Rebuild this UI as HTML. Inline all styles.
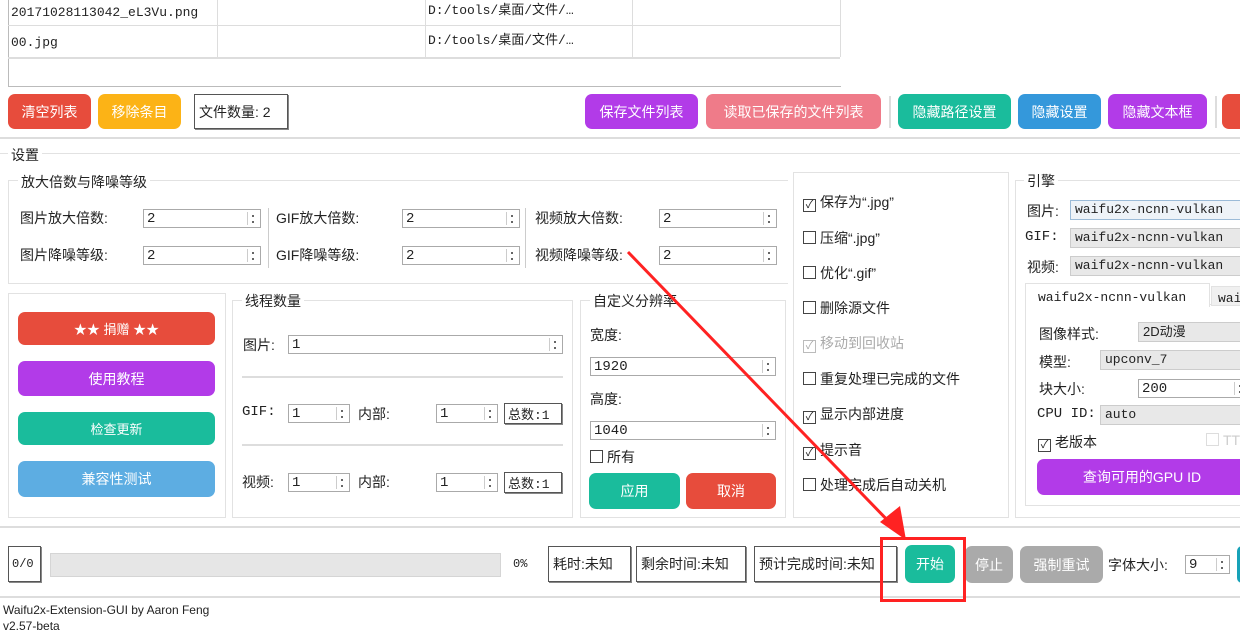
<!DOCTYPE html>
<html><head><meta charset="utf-8"><style>
*{box-sizing:border-box;margin:0;padding:0}
body{width:1240px;height:626px;overflow:hidden;background:#fff;position:relative;font-family:"Liberation Sans","Noto Sans CJK SC",sans-serif;font-size:14px;color:#222}
.a{position:absolute}
.btn{position:absolute;border-radius:7px;color:#fff;text-align:center;font-size:14px;display:flex;align-items:center;justify-content:center}
.box{position:absolute;border:1px solid #555;background:#fff;display:flex;align-items:center;padding-left:4px;font-size:14px;box-shadow:1px 1px 0 #888}
.sp{position:absolute;border:1px solid #aaa;background:#fff;height:19px;font-size:14px;padding-left:3px;line-height:19px;font-family:"Liberation Mono","Noto Sans CJK SC",monospace}
.sp::after{content:"";position:absolute;right:2px;top:2px;width:10px;height:13px;border-left:1px solid #ccc;background:linear-gradient(#666,#666) 4px 3px/2px 2px no-repeat,linear-gradient(#666,#666) 4px 9px/2px 2px no-repeat}
.grp{position:absolute;border:1px solid #e2e2e2}
.gt{position:absolute;background:#fff;padding:0 3px;font-size:14px}
.hl{position:absolute;height:2px;background:#ddd}
.cb{position:absolute;font-size:14px;white-space:nowrap}
.cb i{display:inline-block;width:13px;height:13px;border:1px solid #444;vertical-align:-1px;margin-right:4px;font-style:normal;font-size:11px;line-height:11px;text-align:center}
.cmb{position:absolute;background:#e8e8e8;border:1px solid #ccc;height:20px;font-family:"Liberation Mono",monospace;font-size:13px;padding-left:4px;line-height:18px}
.m{font-family:"Liberation Mono","Noto Sans CJK SC",monospace}
.t{line-height:16px;font-size:13px}
</style></head><body>
<div class="a" style="left:8px;top:0;width:833px;height:87px;border:1px solid #bbb;border-top:none;border-right:none"></div>
<div class="a" style="left:8px;top:25px;width:832px;height:1px;background:#ddd"></div>
<div class="a" style="left:8px;top:57px;width:832px;height:2px;background:#ddd"></div>
<div class="a" style="left:217px;top:0;width:1px;height:57px;background:#ddd"></div>
<div class="a" style="left:425px;top:0;width:1px;height:57px;background:#ddd"></div>
<div class="a" style="left:632px;top:0;width:1px;height:57px;background:#ddd"></div>
<div class="a" style="left:840px;top:0;width:1px;height:57px;background:#ddd"></div>
<div class="a m t" style="left:11px;top:5px">20171028113042_eL3Vu.png</div>
<div class="a m t" style="left:11px;top:35px">00.jpg</div>
<div class="a m t" style="left:428px;top:3px">D:/tools/桌面/文件/…</div>
<div class="a m t" style="left:428px;top:33px">D:/tools/桌面/文件/…</div>
<div class="btn" style="left:8px;top:94px;width:83px;height:35px;background:#e74c3c">清空列表</div>
<div class="btn" style="left:98px;top:94px;width:83px;height:35px;background:#fcb316">移除条目</div>
<div class="box" style="left:194px;top:94px;width:94px;height:35px">文件数量: 2</div>
<div class="btn" style="left:585px;top:94px;width:113px;height:35px;background:#b23be8">保存文件列表</div>
<div class="btn" style="left:706px;top:94px;width:175px;height:35px;background:#ef7b89">读取已保存的文件列表</div>
<div class="a" style="left:889px;top:96px;width:2px;height:32px;background:#ddd"></div>
<div class="btn" style="left:898px;top:94px;width:113px;height:35px;background:#1abc9c">隐藏路径设置</div>
<div class="btn" style="left:1018px;top:94px;width:83px;height:35px;background:#3498db">隐藏设置</div>
<div class="btn" style="left:1108px;top:94px;width:99px;height:35px;background:#b23be8">隐藏文本框</div>
<div class="a" style="left:1215px;top:96px;width:2px;height:32px;background:#ddd"></div>
<div class="btn" style="left:1222px;top:94px;width:30px;height:35px;background:#e74c3c"></div>
<div class="hl" style="left:0;top:137px;width:1240px"></div>
<div class="hl" style="left:0;top:153px;width:1240px;height:1px;background:#e2e2e2"></div>
<div class="gt" style="left:8px;top:145px">设置</div>
<div class="grp" style="left:8px;top:180px;width:780px;height:104px;border-right:none"></div>
<div class="gt" style="left:18px;top:172px">放大倍数与降噪等级</div>
<div class="a" style="left:20px;top:208px">图片放大倍数:</div>
<div class="a" style="left:20px;top:245px">图片降噪等级:</div>
<div class="sp" style="left:143px;top:209px;width:118px">2</div>
<div class="sp" style="left:143px;top:246px;width:118px">2</div>
<div class="a" style="left:268px;top:208px;width:1px;height:60px;background:#ccc"></div>
<div class="a" style="left:276px;top:208px">GIF放大倍数:</div>
<div class="a" style="left:276px;top:245px">GIF降噪等级:</div>
<div class="sp" style="left:402px;top:209px;width:118px">2</div>
<div class="sp" style="left:402px;top:246px;width:118px">2</div>
<div class="a" style="left:525px;top:208px;width:1px;height:60px;background:#ccc"></div>
<div class="a" style="left:535px;top:208px">视频放大倍数:</div>
<div class="a" style="left:535px;top:245px">视频降噪等级:</div>
<div class="sp" style="left:659px;top:209px;width:118px">2</div>
<div class="sp" style="left:659px;top:246px;width:118px">2</div>
<div class="grp" style="left:8px;top:293px;width:218px;height:225px"></div>
<div class="btn" style="left:18px;top:312px;width:197px;height:33px;background:#e74c3c;font-size:13px">★★ 捐赠 ★★</div>
<div class="btn" style="left:18px;top:361px;width:197px;height:35px;background:#b23be8">使用教程</div>
<div class="btn" style="left:18px;top:412px;width:197px;height:33px;background:#1abc9c;font-size:13px">检查更新</div>
<div class="btn" style="left:18px;top:461px;width:197px;height:36px;background:#5dade2">兼容性测试</div>
<div class="grp" style="left:232px;top:300px;width:341px;height:218px"></div>
<div class="gt" style="left:242px;top:291px">线程数量</div>
<div class="a" style="left:243px;top:335px">图片:</div>
<div class="sp" style="left:288px;top:335px;width:275px">1</div>
<div class="hl" style="left:242px;top:376px;width:321px"></div>
<div class="a m" style="left:242px;top:404px">GIF:</div>
<div class="sp" style="left:288px;top:404px;width:62px">1</div>
<div class="a" style="left:358px;top:404px">内部:</div>
<div class="sp" style="left:436px;top:404px;width:62px">1</div>
<div class="box m" style="left:504px;top:403px;width:58px;height:21px;font-size:13px;padding-left:3px">总数:1</div>
<div class="hl" style="left:242px;top:444px;width:321px"></div>
<div class="a" style="left:242px;top:472px">视频:</div>
<div class="sp" style="left:288px;top:473px;width:62px">1</div>
<div class="a" style="left:358px;top:472px">内部:</div>
<div class="sp" style="left:436px;top:473px;width:62px">1</div>
<div class="box m" style="left:504px;top:472px;width:58px;height:21px;font-size:13px;padding-left:3px">总数:1</div>
<div class="grp" style="left:580px;top:300px;width:206px;height:218px"></div>
<div class="gt" style="left:590px;top:291px">自定义分辨率</div>
<div class="a" style="left:590px;top:325px">宽度:</div>
<div class="sp" style="left:590px;top:357px;width:186px">1920</div>
<div class="a" style="left:590px;top:389px">高度:</div>
<div class="sp" style="left:590px;top:421px;width:186px">1040</div>
<div class="cb" style="left:590px;top:447px"><i></i>所有</div>
<div class="btn" style="left:589px;top:473px;width:91px;height:36px;background:#1abc9c">应用</div>
<div class="btn" style="left:686px;top:473px;width:90px;height:36px;background:#e74c3c">取消</div>
<div class="grp" style="left:793px;top:172px;width:216px;height:346px"></div>
<div class="cb" style="left:803px;top:192px"><i>✓</i>保存为“.jpg”</div>
<div class="cb" style="left:803px;top:228px"><i></i>压缩“.jpg”</div>
<div class="cb" style="left:803px;top:263px"><i></i>优化“.gif”</div>
<div class="cb" style="left:803px;top:298px"><i></i>删除源文件</div>
<div class="cb" style="left:803px;top:333px;color:#aaa"><i style="border-color:#bbb">✓</i>移动到回收站</div>
<div class="cb" style="left:803px;top:369px"><i></i>重复处理已完成的文件</div>
<div class="cb" style="left:803px;top:404px"><i>✓</i>显示内部进度</div>
<div class="cb" style="left:803px;top:440px"><i>✓</i>提示音</div>
<div class="cb" style="left:803px;top:475px"><i></i>处理完成后自动关机</div>
<div class="grp" style="left:1015px;top:180px;width:230px;height:338px"></div>
<div class="gt" style="left:1024px;top:171px">引擎</div>
<div class="a" style="left:1027px;top:201px">图片:</div>
<div class="cmb" style="left:1070px;top:200px;width:175px;background:#eef3f8;border-color:#9bbbd8">waifu2x-ncnn-vulkan</div>
<div class="a m" style="left:1025px;top:229px">GIF:</div>
<div class="cmb" style="left:1070px;top:228px;width:175px">waifu2x-ncnn-vulkan</div>
<div class="a" style="left:1027px;top:257px">视频:</div>
<div class="cmb" style="left:1070px;top:256px;width:175px">waifu2x-ncnn-vulkan</div>
<div class="grp" style="left:1025px;top:304px;width:220px;height:202px"></div>
<div class="a" style="left:1025px;top:283px;width:185px;height:24px;border:1px solid #e2e2e2;border-bottom:none;background:#fff"></div>
<div class="a m" style="left:1038px;top:290px;font-size:13px">waifu2x-ncnn-vulkan</div>
<div class="a" style="left:1211px;top:286px;width:40px;height:20px;background:#f0f0f0;border:1px solid #e2e2e2"></div>
<div class="a m" style="left:1218px;top:291px;font-size:13px">wai</div>
<div class="a" style="left:1039px;top:324px">图像样式:</div>
<div class="cmb" style="left:1138px;top:322px;width:110px;font-family:'Liberation Sans','Noto Sans CJK SC',sans-serif">2D动漫</div>
<div class="a" style="left:1039px;top:352px">模型:</div>
<div class="cmb" style="left:1100px;top:350px;width:145px">upconv_7</div>
<div class="a" style="left:1039px;top:379px">块大小:</div>
<div class="sp" style="left:1138px;top:379px;width:110px">200</div>
<div class="a m" style="left:1037px;top:406px">CPU ID:</div>
<div class="cmb" style="left:1100px;top:405px;width:145px">auto</div>
<div class="cb" style="left:1038px;top:432px"><i>✓</i>老版本</div>
<div class="cb" style="left:1206px;top:432px;color:#ccc"><i style="border-color:#ddd"></i>TT</div>
<div class="btn" style="left:1037px;top:459px;width:210px;height:36px;background:#b23be8">查询可用的GPU ID</div>
<div class="hl" style="left:0;top:526px;width:1240px"></div>
<div class="box m" style="left:8px;top:546px;width:33px;height:36px;font-size:12px;padding-left:3px">0/0</div>
<div class="a" style="left:50px;top:553px;width:451px;height:24px;background:#e6e6e6;border:1px solid #d5d5d5"></div>
<div class="a m" style="left:513px;top:557px;font-size:12px">0%</div>
<div class="box" style="left:548px;top:546px;width:83px;height:36px">耗时:未知</div>
<div class="box" style="left:636px;top:546px;width:110px;height:36px">剩余时间:未知</div>
<div class="box" style="left:754px;top:546px;width:143px;height:36px;overflow:hidden;white-space:nowrap">预计完成时间:未知</div>
<div class="btn" style="left:905px;top:545px;width:50px;height:38px;background:#1abc9c">开始</div>
<div class="btn" style="left:965px;top:546px;width:48px;height:37px;background:#aaa">停止</div>
<div class="btn" style="left:1020px;top:546px;width:83px;height:37px;background:#aaa">强制重试</div>
<div class="a" style="left:1108px;top:555px">字体大小:</div>
<div class="sp" style="left:1185px;top:555px;width:45px">9</div>
<div class="btn" style="left:1237px;top:546px;width:10px;height:37px;background:#17a2b8"></div>
<div class="hl" style="left:0;top:596px;width:1240px"></div>
<div class="a" style="left:3px;top:603px;font-size:12px">Waifu2x-Extension-GUI by Aaron Feng</div>
<div class="a" style="left:3px;top:619px;font-size:12px">v2.57-beta</div>
<svg class="a" style="left:0;top:0" width="1240" height="626">
<line x1="628" y1="252" x2="895" y2="528" stroke="#f22" stroke-width="3"/>
<polygon points="906,540 880,522 900,506" fill="#f22"/>
<rect x="881.5" y="538.5" width="83" height="62" fill="none" stroke="#f22" stroke-width="3"/>
</svg>
</body></html>
